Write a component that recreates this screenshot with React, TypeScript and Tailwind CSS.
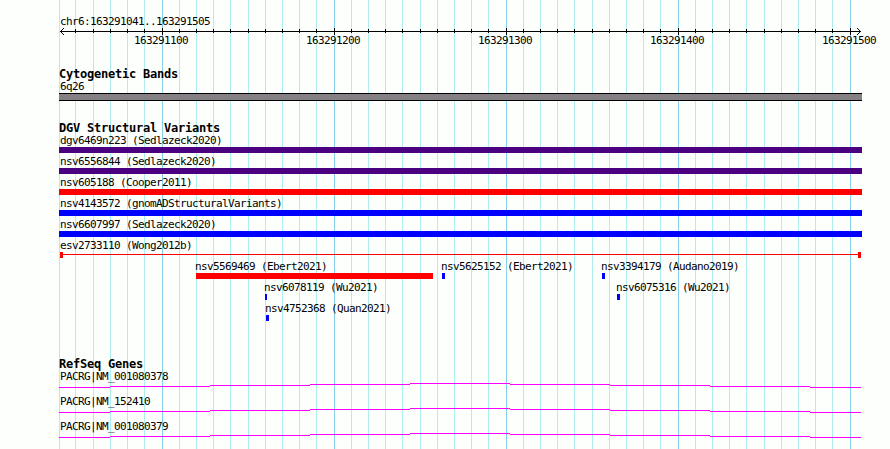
import type { ReactNode } from "react";

const MINOR = [
  59, 75, 93, 110, 127, 144, 179, 196, 213, 230, 248, 265, 282, 299, 316, 351, 368, 385, 402, 420,
  437, 454, 471, 488, 523, 540, 557, 574, 592, 609, 626, 643, 660, 695, 712, 729, 746, 764, 781,
  798, 815, 832,
];
const MAJOR = [162, 334, 506, 678, 850];

function Grid() {
  return (
    <svg className="absolute inset-0" width="890" height="449" shapeRendering="crispEdges">
      {MINOR.map((x) => (
        <rect key={x} x={x} y="0" width="1" height="449" fill="#afeeee" />
      ))}
      {MAJOR.map((x) => (
        <rect key={x} x={x} y="0" width="1" height="449" fill="#87ceeb" />
      ))}
    </svg>
  );
}

function Axis() {
  return (
    <svg className="block" width="890" height="9" shapeRendering="crispEdges">
      <rect x="60" y="4" width="801" height="1" />
      {MINOR.slice(1).map((x) => (
        <rect key={x} x={x} y="2" width="1" height="4" />
      ))}
      {MAJOR.map((x) => (
        <rect key={x} x={x} y="1" width="1" height="7" />
      ))}
      {[1, 2, 3].map((d) => (
        <g key={d}>
          <rect x={60 + d} y={4 - d} width="1" height="1" />
          <rect x={60 + d} y={4 + d} width="1" height="1" />
          <rect x={860 - d} y={4 - d} width="1" height="1" />
          <rect x={860 - d} y={4 + d} width="1" height="1" />
        </g>
      ))}
    </svg>
  );
}

function Label({ children }: { children: ReactNode }) {
  return <div className="h-[15px] pl-px text-[11px] leading-[17px] tracking-[-0.622px]">{children}</div>;
}

function Heading({ children }: { children: ReactNode }) {
  return (
    <h2 className="h-[14px] pl-[59px] text-[12px] leading-[15px] font-bold tracking-[-0.224px]">{children}</h2>
  );
}

function WideVariant({ name, color }: { name: string; color: string }) {
  return (
    <div className="ml-[59px] w-[803px]">
      <Label>{name}</Label>
      <div className={`h-[6px] ${color}`} />
    </div>
  );
}

function Variant({ name, offset, bar, color = "bg-[#0000ff]" }: { name: string; offset: string; bar: string; color?: string }) {
  return (
    <div className={`w-0 ${offset}`}>
      <div className="-ml-[2px]">
        <Label>{name}</Label>
      </div>
      <div className={`h-[6px] ${bar} ${color}`} />
    </div>
  );
}

const INTRON = [
  [59, 51, 4],
  [110, 100, 3],
  [210, 100, 2],
  [310, 100, 1],
  [410, 100, 0],
  [510, 100, 1],
  [610, 100, 2],
  [710, 100, 3],
  [810, 51, 4],
];

function Gene({ name }: { name: string }) {
  return (
    <div className="h-[25px]">
      <div className="ml-[59px]">
        <Label>{name}</Label>
      </div>
      <svg className="block" width="890" height="5" shapeRendering="crispEdges">
        {INTRON.map(([x, w, y]) => (
          <rect key={x} x={x} y={y} width={w} height="1" fill="#ff00ff" />
        ))}
      </svg>
    </div>
  );
}

export default function App() {
  return (
    <div className="relative h-[449px] w-[890px] overflow-hidden bg-[#fdfffc] font-['DejaVu_Sans_Mono',monospace] whitespace-nowrap text-black">
      <Grid />
      <main className="relative pt-[13px]">
        <div className="ml-[59px] h-[14px]">
          <Label>chr6:163291041..163291505</Label>
        </div>
        <Axis />
        <div className="-mt-[4px] flex gap-[118px] pl-[133px]">
          {[1100, 1200, 1300, 1400, 1500].map((n) => (
            <div key={n} className="w-[54px]">
              <Label>{`16329${n}`}</Label>
            </div>
          ))}
        </div>

        <section className="pt-[20px]">
          <Heading>Cytogenetic Bands</Heading>
          <div className="-mt-[3px] ml-[59px] w-[803px]">
            <Label>6q26</Label>
            <div className="h-[8px] border-y border-black bg-[#848084]" />
          </div>
        </section>

        <section className="pt-[20px]">
          <Heading>DGV Structural Variants</Heading>
          <div className="-mt-[3px]">
            <WideVariant name="dgv6469n223 (Sedlazeck2020)" color="bg-[#4b0082]" />
            <WideVariant name="nsv6556844 (Sedlazeck2020)" color="bg-[#4b0082]" />
            <WideVariant name="nsv605188 (Cooper2011)" color="bg-[#ff0000]" />
            <WideVariant name="nsv4143572 (gnomADStructuralVariants)" color="bg-[#0000ff]" />
            <WideVariant name="nsv6607997 (Sedlazeck2020)" color="bg-[#0000ff]" />
            <div className="ml-[59px] w-[803px]">
              <Label>esv2733110 (Wong2012b)</Label>
              <div className="flex h-[6px] pr-px pl-px">
                <div className="w-[3px] bg-[#ff0000]" />
                <div className="mt-[2px] h-px flex-1 bg-[#ff0000]" />
                <div className="w-[3px] bg-[#ff0000]" />
              </div>
            </div>
            <div className="flex">
              <Variant name="nsv5569469 (Ebert2021)" offset="ml-[196px]" bar="w-[237px]" color="bg-[#ff0000]" />
              <Variant name="nsv5625152 (Ebert2021)" offset="ml-[246px]" bar="w-[3px]" />
              <Variant name="nsv3394179 (Audano2019)" offset="ml-[160px]" bar="w-[3px]" />
            </div>
            <div className="flex">
              <Variant name="nsv6078119 (Wu2021)" offset="ml-[265px]" bar="w-[2px]" />
              <Variant name="nsv6075316 (Wu2021)" offset="ml-[352px]" bar="w-[3px]" />
            </div>
            <Variant name="nsv4752368 (Quan2021)" offset="ml-[266px]" bar="w-[3px]" />
          </div>
        </section>

        <section className="pt-[36px]">
          <Heading>RefSeq Genes</Heading>
          <div className="-mt-[3px]">
            <Gene name="PACRG|NM_001080378" />
            <Gene name="PACRG|NM_152410" />
            <Gene name="PACRG|NM_001080379" />
          </div>
        </section>
      </main>
    </div>
  );
}
